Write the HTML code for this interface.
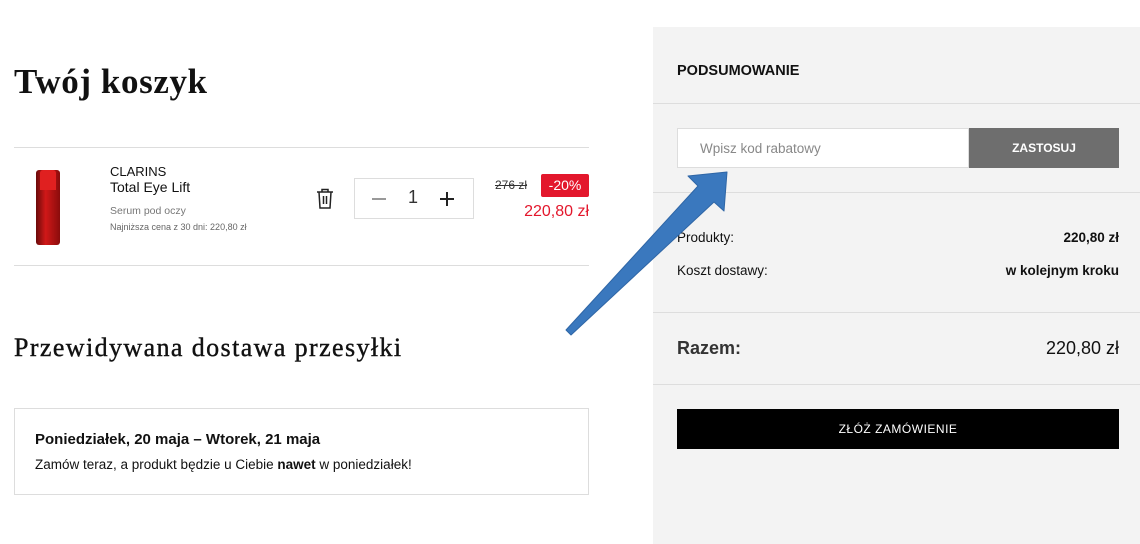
<!DOCTYPE html>
<html><head><meta charset="utf-8"><style>
*{margin:0;padding:0;box-sizing:border-box}
body{width:1140px;height:544px;background:#fff;font-family:"Liberation Sans",sans-serif;color:#111;position:relative;overflow:hidden}
.a{position:absolute}
.serif{font-family:"Liberation Serif",serif;font-weight:bold}
.r{text-align:right}
</style></head><body>
<div class="a serif" style="left:14px;top:62px;font-size:35px;letter-spacing:0.6px">Twój koszyk</div>
<div class="a" style="left:14px;top:147px;width:575px;height:1px;background:#ddd"></div>
<div class="a" style="left:14px;top:265px;width:575px;height:1px;background:#ddd"></div>
<div class="a" style="left:36px;top:170px;width:24px;height:75px;background:linear-gradient(90deg,#6a0a0a,#d01818 40%,#8a0c0c);border-radius:3px"></div>
<div class="a" style="left:40px;top:170px;width:16px;height:20px;background:#e02020;border-radius:3px 3px 0 0"></div>
<div class="a" style="left:110px;top:164px;font-size:13px">CLARINS</div>
<div class="a" style="left:110px;top:179px;font-size:14px">Total Eye Lift</div>
<div class="a" style="left:110px;top:205px;font-size:10.5px;color:#777">Serum pod oczy</div>
<div class="a" style="left:110px;top:222px;font-size:9px;color:#666">Najniższa cena z 30 dni: 220,80 zł</div>
<svg class="a" style="left:316px;top:188px" width="18" height="21" viewBox="0 0 18 21" fill="none" stroke="#222" stroke-width="1.5"><path d="M1 4h16M6 4V1.5h6V4M3 4l1 16h10l1-16M7.5 8v8M10.5 8v8"/></svg>
<div class="a" style="left:354px;top:178px;width:120px;height:41px;border:1px solid #ddd"></div>
<div class="a" style="left:372px;top:198px;width:14px;height:1.5px;background:#999"></div>
<div class="a" style="left:408px;top:187px;font-size:18px;color:#333">1</div>
<div class="a" style="left:440px;top:198px;width:14px;height:1.5px;background:#222"></div>
<div class="a" style="left:446px;top:192px;width:1.5px;height:14px;background:#222"></div>
<div class="a" style="left:495px;top:178px;font-size:12px;color:#333;text-decoration:line-through">276 zł</div>
<div class="a" style="left:541px;top:174px;width:48px;height:23px;background:#e3172c;color:#fff;font-size:14px;text-align:center;line-height:23px;border-radius:2px">-20%</div>
<div class="a r" style="left:480px;width:109px;top:203px;font-size:16px;color:#e3172c">220,80 zł</div>
<div class="a" style="left:14px;top:333px;font-size:26px;font-family:'Liberation Serif',serif;letter-spacing:1.4px;-webkit-text-stroke:0.4px #111">Przewidywana dostawa przesyłki</div>
<div class="a" style="left:14px;top:408px;width:575px;height:87px;border:1px solid #ddd"></div>
<div class="a" style="left:35px;top:431px;font-size:15px;font-weight:bold">Poniedziałek, 20 maja – Wtorek, 21 maja</div>
<div class="a" style="left:35px;top:457px;font-size:13.5px">Zamów teraz, a produkt będzie u Ciebie <b>nawet</b> w poniedziałek!</div>
<div class="a" style="left:653px;top:27px;width:487px;height:517px;background:#f3f3f3"></div>
<div class="a" style="left:677px;top:63px;font-size:14.5px;font-weight:bold">PODSUMOWANIE</div>
<div class="a" style="left:653px;top:103px;width:487px;height:1px;background:#ddd"></div>
<div class="a" style="left:677px;top:128px;width:292px;height:40px;background:#fff;border:1px solid #ddd;font-size:13.5px;color:#888;padding:12px 0 0 22px">Wpisz kod rabatowy</div>
<div class="a" style="left:969px;top:128px;width:150px;height:40px;background:#6e6e6e;color:#fff;font-size:12px;font-weight:bold;text-align:center;line-height:40px">ZASTOSUJ</div>
<div class="a" style="left:653px;top:192px;width:487px;height:1px;background:#ddd"></div>
<div class="a" style="left:677px;top:230px;font-size:13.5px">Produkty:</div>
<div class="a r" style="left:900px;width:219px;top:230px;font-size:13.5px;font-weight:bold">220,80 zł</div>
<div class="a" style="left:677px;top:263px;font-size:13.5px">Koszt dostawy:</div>
<div class="a r" style="left:900px;width:219px;top:263px;font-size:13.5px;font-weight:bold">w kolejnym kroku</div>
<div class="a" style="left:653px;top:312px;width:487px;height:1px;background:#ddd"></div>
<div class="a" style="left:677px;top:338px;font-size:18px;font-weight:bold;color:#333">Razem:</div>
<div class="a r" style="left:900px;width:219px;top:338px;font-size:18px">220,80 zł</div>
<div class="a" style="left:653px;top:384px;width:487px;height:1px;background:#ddd"></div>
<div class="a" style="left:677px;top:409px;width:442px;height:40px;background:#000;color:#fff;font-size:12px;text-align:center;line-height:40px;letter-spacing:0.5px">ZŁÓŻ ZAMÓWIENIE</div>
<svg class="a" style="left:0;top:0" width="1140" height="544"><path d="M566 330L571 335L714 202L724 211L727 172L688 176L698 186Z" fill="#3a78be" stroke="#2f66a6" stroke-width="1" stroke-linejoin="round"/></svg>
</body></html>
